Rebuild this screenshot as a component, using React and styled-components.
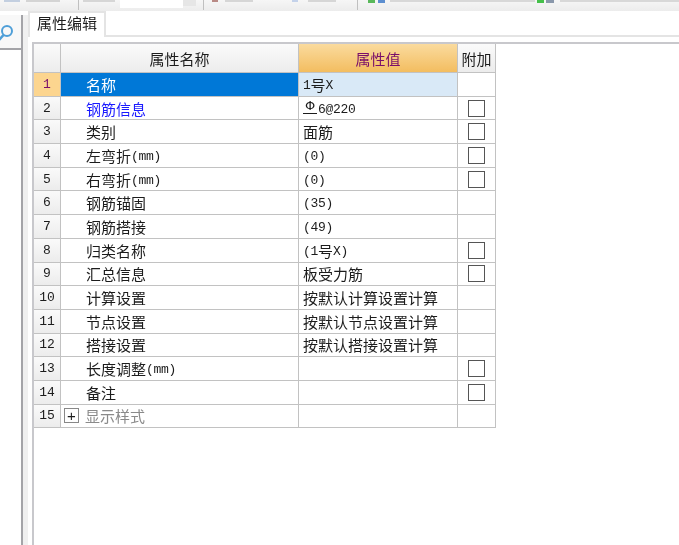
import React from "react";
import styled, { createGlobalStyle } from "styled-components";

const rows = [
  { name: "名称", value: "1号X", selected: true },
  { name: "钢筋信息", value: "6@220", rebar: true, blue: true, check: true },
  { name: "类别", value: "面筋", check: true },
  { name: "左弯折(mm)", value: "(0)", check: true },
  { name: "右弯折(mm)", value: "(0)", check: true },
  { name: "钢筋锚固", value: "(35)" },
  { name: "钢筋搭接", value: "(49)" },
  { name: "归类名称", value: "(1号X)", check: true },
  { name: "汇总信息", value: "板受力筋", check: true },
  { name: "计算设置", value: "按默认计算设置计算" },
  { name: "节点设置", value: "按默认节点设置计算" },
  { name: "搭接设置", value: "按默认搭接设置计算" },
  { name: "长度调整(mm)", value: "", check: true },
  { name: "备注", value: "", check: true },
  { name: "显示样式", value: "", group: true },
];

// cut-off toolbar above the panel: gap from previous piece, width, height, colour
const stripBits = [
  { gap: 4, w: 16, h: 2, c: "#c3cfe0" },
  { gap: 6, w: 34, h: 2, c: "#d4d4d4" },
  { gap: 18, w: 1, h: 10, c: "#c0c0c0" },
  { gap: 4, w: 32, h: 2, c: "#d6d6d6" },
  { gap: 5, w: 63, h: 8, c: "#ffffff" },
  { gap: 0, w: 13, h: 6, c: "#e6e6e6" },
  { gap: 7, w: 1, h: 10, c: "#c0c0c0" },
  { gap: 8, w: 6, h: 2, c: "#b98a86" },
  { gap: 7, w: 28, h: 2, c: "#d6d6d6" },
  { gap: 39, w: 6, h: 2, c: "#c4d2ea" },
  { gap: 10, w: 28, h: 2, c: "#d6d6d6" },
  { gap: 21, w: 1, h: 10, c: "#c0c0c0" },
  { gap: 10, w: 7, h: 3, c: "#59b85a" },
  { gap: 3, w: 7, h: 3, c: "#5d8fd0" },
  { gap: 5, w: 145, h: 2, c: "#d8d8d8" },
  { gap: 2, w: 7, h: 3, c: "#45c04a" },
  { gap: 2, w: 8, h: 3, c: "#8a98ab" },
  { gap: 6, w: 119, h: 2, c: "#d8d8d8" },
];

// half-width characters run in a mono face, as the grid's bitmap font does
const Mixed = ({ text }) => (
  <span>
    {text
      .split(/([\x20-\x7e]+)/)
      .map((part, i) => (i % 2 ? <Latin key={i}>{part}</Latin> : part))}
  </span>
);

const App = () => {
  return (
    <>
      <GlobalStyle />
      <Page>
        <TopStrip>
          {stripBits.map((b, i) => (
            <StripBit key={i} $gap={b.gap} $w={b.w} $h={b.h} $c={b.c} />
          ))}
        </TopStrip>
        <Body>
          <SidePanel>
            <SearchBox>
              <svg width="18" height="20" viewBox="0 0 18 20">
                <circle cx="9" cy="8" r="5" fill="none" stroke="#4f9fd8" strokeWidth="2" />
                <path d="M5.5 12 L1 17" stroke="#4f9fd8" strokeWidth="2.6" />
              </svg>
            </SearchBox>
          </SidePanel>
          <Main>
            <TabBar>
              <Tab>属性编辑</Tab>
            </TabBar>
            <TablePanel>
              <Grid>
                <Corner />
                <HeadCell>属性名称</HeadCell>
                <HeadCell $active>属性值</HeadCell>
                <HeadCell>附加</HeadCell>
                {rows.map((row, i) => (
                  <React.Fragment key={row.name}>
                    <NumCell $selected={row.selected}>{i + 1}</NumCell>
                    <NameCell $selected={row.selected} $blue={row.blue} $group={row.group}>
                      {row.group && <Expander>+</Expander>}
                      <Mixed text={row.name} />
                    </NameCell>
                    <ValueCell $selected={row.selected}>
                      {row.rebar && <RebarMark>Φ</RebarMark>}
                      <Mixed text={row.value} />
                    </ValueCell>
                    <CheckCell>{row.check && <CheckBox />}</CheckCell>
                  </React.Fragment>
                ))}
              </Grid>
            </TablePanel>
          </Main>
        </Body>
      </Page>
    </>
  );
};

export default App;

const GlobalStyle = createGlobalStyle`
  html, body {
    margin: 0;
    padding: 0;
    background: #fff;
  }
`;

const Page = styled.div`
  width: 679px;
  height: 545px;
  overflow: hidden;
  display: flex;
  flex-direction: column;
  font-family: "Noto Sans CJK SC", "Liberation Sans", sans-serif;
  font-size: 15px;
  color: #1c1c1c;
  filter: blur(0.35px);
`;

const TopStrip = styled.div`
  height: 11px;
  flex: none;
  display: flex;
  align-items: flex-start;
  background: linear-gradient(#f6f6f6, #ececec);
`;

const StripBit = styled.div`
  flex: none;
  margin-left: ${(p) => p.$gap}px;
  width: ${(p) => p.$w}px;
  height: ${(p) => p.$h}px;
  background: ${(p) => p.$c};
`;

const Body = styled.div`
  flex: 1;
  display: flex;
  min-height: 0;
`;

const SidePanel = styled.div`
  width: 23px;
  flex: none;
  box-sizing: border-box;
  margin-top: 4px;
  border-right: 2px solid #a4a4a8;
`;

const SearchBox = styled.div`
  height: 35px;
  box-sizing: border-box;
  display: flex;
  align-items: center;
  justify-content: flex-end;
  overflow: hidden;
  padding-top: 2px;
  background: #f8f8f8;
  border-bottom: 2px solid #a4a4a8;
  svg {
    flex: none;
    margin-right: 5px;
  }
`;

const Main = styled.div`
  flex: 1;
  min-width: 0;
  display: flex;
  flex-direction: column;
  padding-left: 5px;
  background: linear-gradient(#fff 4px, #f0f0f0 4px);
`;

const TabBar = styled.div`
  height: 26px;
  flex: none;
  box-sizing: border-box;
  display: flex;
  background: #fff;
  border-bottom: 2px solid #e4e4e4;
`;

const Tab = styled.div`
  width: 78px;
  height: 26px;
  box-sizing: border-box;
  background: #fff;
  border: 2px solid #e4e4e4;
  border-bottom: none;
  text-align: center;
  line-height: 20px;
`;

const TablePanel = styled.div`
  flex: 1;
  background: #fff;
  padding: 5px 0 0 4px;
  display: flex;
`;

const Grid = styled.div`
  flex: 1;
  display: grid;
  grid-template-columns: 27px 238px 159px 38px;
  grid-template-rows: 29px repeat(15, 23.7px);
  align-content: start;
  justify-content: start;
  border-top: 2px solid #c8c8cc;
  border-left: 2px solid #c8c8cc;
`;

const Cell = styled.div`
  box-sizing: border-box;
  display: flex;
  align-items: center;
  min-width: 0;
  white-space: nowrap;
  border-right: 1px solid #c2c2c2;
  border-bottom: 1px solid #c2c2c2;
`;

const Corner = styled(Cell)`
  background: linear-gradient(#fafafa, #ececec);
`;

const HeadCell = styled(Cell)`
  justify-content: center;
  background: ${(p) =>
    p.$active
      ? "linear-gradient(#fadb9e, #f3bd60)"
      : "linear-gradient(#fafafa, #ececec)"};
  color: ${(p) => (p.$active ? "#7a0f6a" : "#1c1c1c")};
`;

const NumCell = styled(Cell)`
  justify-content: center;
  font-family: "Liberation Mono", monospace;
  font-size: 13px;
  background: ${(p) => (p.$selected ? "#fcd58f" : "linear-gradient(#fafafa, #ececec)")};
  color: ${(p) => (p.$selected ? "#7a0f6a" : "#1c1c1c")};
`;

const NameCell = styled(Cell)`
  padding-left: ${(p) => (p.$group ? "3px" : "25px")};
  gap: 6px;
  background: ${(p) => (p.$selected ? "#0078d7" : "#fff")};
  color: ${(p) => {
    if (p.$selected) return "#fff";
    if (p.$blue) return "#1a1aff";
    if (p.$group) return "#8a8a8a";
    return "#1c1c1c";
  }};
`;

const ValueCell = styled(Cell)`
  padding-left: 4px;
  background: ${(p) => (p.$selected ? "#d9e9f7" : "#fff")};
`;

const CheckCell = styled(Cell)`
  justify-content: center;
`;

const Latin = styled.span`
  font-family: "Liberation Mono", monospace;
  font-size: 13px;
  letter-spacing: -0.3px;
  vertical-align: 2px;
`;

const RebarMark = styled.span`
  width: 14px;
  flex: none;
  margin: 0 1px 3px 0;
  text-align: center;
  font-family: "DejaVu Sans", sans-serif;
  font-size: 13px;
  line-height: 14px;
  border-bottom: 1px solid #1c1c1c;
  box-sizing: border-box;
`;

const CheckBox = styled.div`
  width: 17px;
  height: 17px;
  box-sizing: border-box;
  border: 1px solid #555;
  background: #fff;
`;

const Expander = styled.div`
  width: 15px;
  height: 15px;
  box-sizing: border-box;
  border: 1px solid #888;
  color: #1c1c1c;
  display: flex;
  align-items: center;
  justify-content: center;
  font-family: "Liberation Sans", sans-serif;
  font-size: 15px;
  line-height: 1;
`;
